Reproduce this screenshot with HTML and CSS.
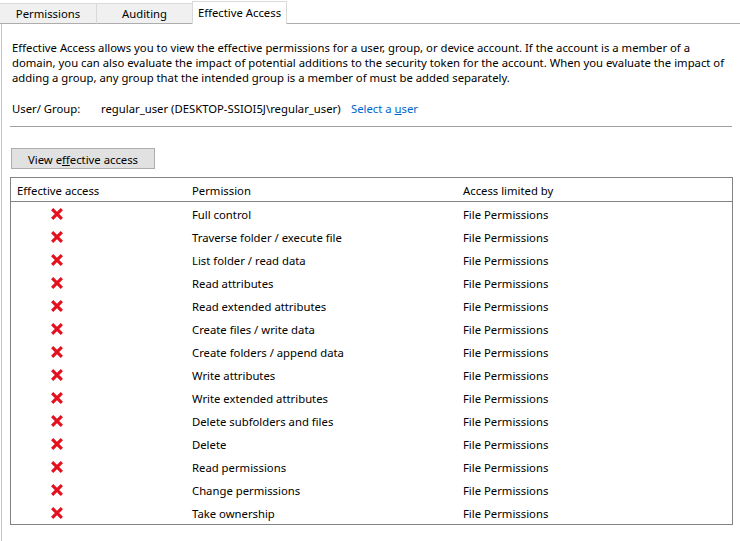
FILE: index.html
```html
<!DOCTYPE html>
<html>
<head>
<meta charset="utf-8">
<link rel="stylesheet" href="styles.css">
</head>
<body>
<div class="window">
  <div class="tabs">
    <div class="tab t1">Permissions</div>
    <div class="tab t2">Auditing</div>
    <div class="tab active">Effective Access</div>
    <div class="tab-fill"></div>
  </div>
  <div class="panel">
    <p class="intro">Effective Access allows you to view the effective permissions for a user, group, or device account. If the account is a member of a<br>domain, you can also evaluate the impact of potential additions to the security token for the account. When you evaluate the impact of<br>adding a group, any group that the intended group is a member of must be added separately.</p>
    <div class="user-row">
      <span class="label">User/ Group:</span>
      <span class="uname">regular_user (DESKTOP-SSIOI5J\regular_user)</span>
      <a class="link">Select a <u>u</u>ser</a>
    </div>
    <div class="sep"></div>
    <button class="btn">View e<u>f</u>fective access</button>
    <div class="table">
      <div class="row head">
        <div class="c1">Effective access</div>
        <div class="c2">Permission</div>
        <div class="c3">Access limited by</div>
      </div>
      <div class="body">
        <div class="row"><div class="c1 x"><svg viewBox="0 0 13 13"><path d="M2 2L11 11M11 2L2 11"/></svg></div><div class="c2">Full control</div><div class="c3">File Permissions</div></div>
        <div class="row"><div class="c1 x"><svg viewBox="0 0 13 13"><path d="M2 2L11 11M11 2L2 11"/></svg></div><div class="c2">Traverse folder / execute file</div><div class="c3">File Permissions</div></div>
        <div class="row"><div class="c1 x"><svg viewBox="0 0 13 13"><path d="M2 2L11 11M11 2L2 11"/></svg></div><div class="c2">List folder / read data</div><div class="c3">File Permissions</div></div>
        <div class="row"><div class="c1 x"><svg viewBox="0 0 13 13"><path d="M2 2L11 11M11 2L2 11"/></svg></div><div class="c2">Read attributes</div><div class="c3">File Permissions</div></div>
        <div class="row"><div class="c1 x"><svg viewBox="0 0 13 13"><path d="M2 2L11 11M11 2L2 11"/></svg></div><div class="c2">Read extended attributes</div><div class="c3">File Permissions</div></div>
        <div class="row"><div class="c1 x"><svg viewBox="0 0 13 13"><path d="M2 2L11 11M11 2L2 11"/></svg></div><div class="c2">Create files / write data</div><div class="c3">File Permissions</div></div>
        <div class="row"><div class="c1 x"><svg viewBox="0 0 13 13"><path d="M2 2L11 11M11 2L2 11"/></svg></div><div class="c2">Create folders / append data</div><div class="c3">File Permissions</div></div>
        <div class="row"><div class="c1 x"><svg viewBox="0 0 13 13"><path d="M2 2L11 11M11 2L2 11"/></svg></div><div class="c2">Write attributes</div><div class="c3">File Permissions</div></div>
        <div class="row"><div class="c1 x"><svg viewBox="0 0 13 13"><path d="M2 2L11 11M11 2L2 11"/></svg></div><div class="c2">Write extended attributes</div><div class="c3">File Permissions</div></div>
        <div class="row"><div class="c1 x"><svg viewBox="0 0 13 13"><path d="M2 2L11 11M11 2L2 11"/></svg></div><div class="c2">Delete subfolders and files</div><div class="c3">File Permissions</div></div>
        <div class="row"><div class="c1 x"><svg viewBox="0 0 13 13"><path d="M2 2L11 11M11 2L2 11"/></svg></div><div class="c2">Delete</div><div class="c3">File Permissions</div></div>
        <div class="row"><div class="c1 x"><svg viewBox="0 0 13 13"><path d="M2 2L11 11M11 2L2 11"/></svg></div><div class="c2">Read permissions</div><div class="c3">File Permissions</div></div>
        <div class="row"><div class="c1 x"><svg viewBox="0 0 13 13"><path d="M2 2L11 11M11 2L2 11"/></svg></div><div class="c2">Change permissions</div><div class="c3">File Permissions</div></div>
        <div class="row"><div class="c1 x"><svg viewBox="0 0 13 13"><path d="M2 2L11 11M11 2L2 11"/></svg></div><div class="c2">Take ownership</div><div class="c3">File Permissions</div></div>
      </div>
    </div>
  </div>
</div>
</body>
</html>
```

FILE: styles.css
```css
* { box-sizing: border-box; }
html, body {
  margin: 0;
  padding: 0;
  background: #ffffff;
}
body {
  font-family: "Noto Sans", "Open Sans", sans-serif;
  font-size: 11.3px;
  color: #000;
  width: 740px;
  height: 541px;
  overflow: hidden;
}
.window {
  height: 541px;
  display: flex;
  flex-direction: column;
}
.tabs {
  display: flex;
  height: 24px;
  align-items: flex-end;
}
.tab {
  height: 21px;
  background: #f0f0f0;
  border: 1px solid #d9d9d9;
  border-bottom: 1px solid #adadad;
  border-right: none;
  display: flex;
  align-items: center;
  justify-content: center;
  line-height: 15px;
  padding-bottom: 1px;
}
.t1 { width: 96px; border-left: none; }
.t2 { width: 96px; }
.tab.active {
  width: 95px;
  height: 23px;
  background: #fff;
  border: 1px solid #d9d9d9;
  border-bottom: none;
  padding-bottom: 2px;
}
.tab-fill {
  flex: 1;
  border-bottom: 1px solid #adadad;
}
.panel {
  flex: 1;
  margin-left: 1px;
  border-left: 1px solid #c4c4c4;
  padding: 16px 7px 0 9px;
}
.intro {
  margin: 0;
  line-height: 15px;
  white-space: nowrap;
  padding-left: 1px;
}
.user-row {
  margin-top: 16px;
  line-height: 15px;
  display: flex;
  padding-left: 1px;
  white-space: nowrap;
}
.label { width: 89px; }
.uname { width: 250px; }
.link { color: #0066cc; }
.link u { text-decoration: underline; }
.sep {
  margin-top: 10px;
  height: 1px;
  background: #a0a0a0;
  width: 722px;
  margin-left: -1px;
}
.btn {
  display: block;
  margin-top: 21px;
  width: 144px;
  height: 21px;
  padding: 1px 0 0 0;
  background: #e1e1e1;
  border: 1px solid #adadad;
  font-family: inherit;
  font-size: 11.3px;
  color: #000;
  line-height: 15px;
}
.table {
  margin-top: 8px;
  margin-left: -1px;
  width: 723px;
  border: 1px solid #828282;
  height: 348px;
}
.row {
  display: grid;
  grid-template-columns: 175px 271px 1fr;
  height: 23px;
  align-items: center;
  line-height: 15px;
  padding-top: 1px;
}
.row.head {
  height: 24px;
  border-bottom: 1px solid #828282;
}
.c1 { padding-left: 6px; }
.c2, .c3 { padding-left: 6px; }
.c1.x {
  padding-left: 39px;
  display: flex;
  align-items: center;
}
.x svg {
  width: 14px;
  height: 14px;
  display: block;
}
.x path {
  stroke: #e3101e;
  stroke-width: 2.9;
  fill: none;
}
```
